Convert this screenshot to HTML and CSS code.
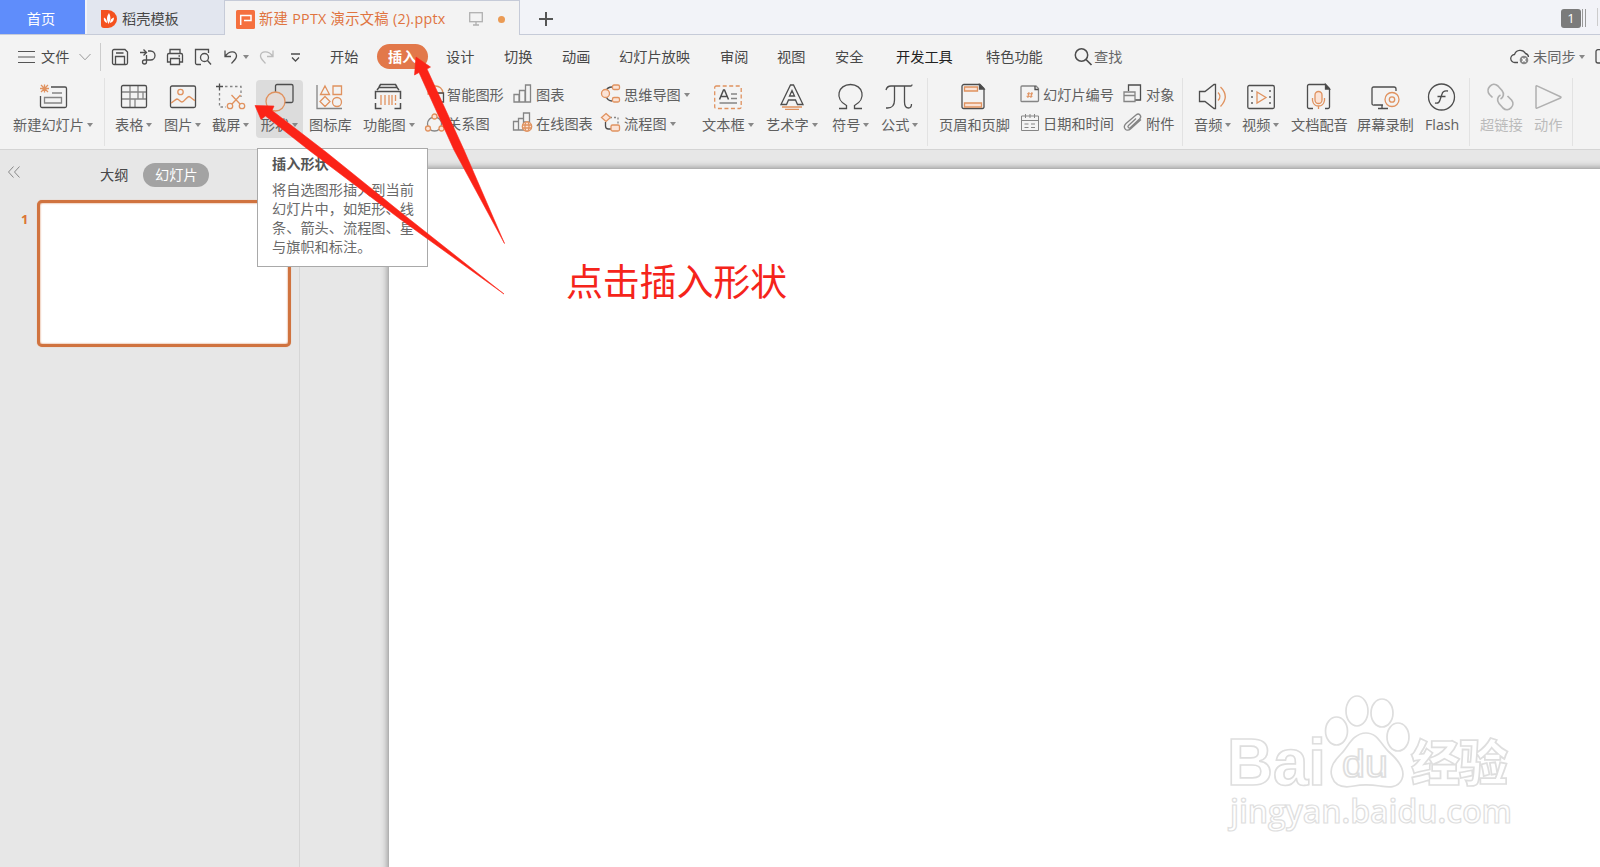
FILE: index.html
```html
<!DOCTYPE html>
<html lang="zh-CN">
<head>
<meta charset="utf-8">
<title>新建 PPTX 演示文稿 (2).pptx</title>
<link rel="stylesheet" href="styles.css">
</head>
<body>
<div class="app">
  <header class="tabs">
    <div class="tab home">首页</div>
    <div class="tab docer">
      <svg width="16" height="18" viewBox="0 0 16 18"><path d="M0 0h7a9 9 0 0 1 0 18H3a3 3 0 0 1-3-3z" fill="#f4511e"/><path d="M7.500 14C5 9 6 6 8 3c2 4 2 7-.5 11zM6 13C3 12 2.500 9 3 7.500 5 8.500 6 10.500 6 13zM9 13c0-3 1.500-5 4-5.500 0 3-1.500 5-4 5.500z" fill="#fff"/></svg>
      <span>稻壳模板</span>
    </div>
    <div class="tab doc">
      <svg width="19" height="19" viewBox="0 0 19 19"><rect width="19" height="19" rx="1.500" fill="#f5703e"/><path d="M4.700 15V5.500H15v5H8" fill="none" stroke="#fff" stroke-width="1.500"/></svg>
      <span class="doc-name">新建 PPTX 演示文稿 (2).pptx</span>
      <svg class="monitor" width="14" height="14" viewBox="0 0 14 14" fill="none" stroke="#b0b0b0" stroke-width="1.300"><rect x=".7" y=".7" width="12.600" height="9"/><path d="M7 10v3M4 13h6"/></svg>
      <i class="dot"></i>
    </div>
    <svg class="plus" width="14" height="14" viewBox="0 0 14 14"><path d="M7 0v14M0 7h14" stroke="#555" stroke-width="2"/></svg>
    <div class="count">1</div><i class="pages"></i><i class="edge"></i>
  </header>

  <nav class="menu">
    <svg width="18" height="14" viewBox="0 0 18 14" stroke="#555" stroke-width="1.200"><path d="M0 1.500h17M0 7h17M0 12.500h17"/></svg>
    <span>文件</span>
    <svg width="12" height="8" viewBox="0 0 12 8" fill="none" stroke="#999"><path d="M.5 1 6 6.800 11.500 1"/></svg>
    <i class="vline"></i>
    <svg class="ic" width="18" height="18" viewBox="0 0 18 18"><path d="M1.500 3a1.500 1.500 0 0 1 1.500-1.500h11L16.500 4v11a1.500 1.500 0 0 1-1.500 1.500H3A1.500 1.500 0 0 1 1.500 15zM4.500 16V8.500h9V16M5 5h7.500"/></svg>
    <svg class="ic" width="18" height="18" viewBox="0 0 18 18"><path d="M1 4.500h6M4.500 1.500 7.500 4.500l-3 3M9 3h2.500a4.500 4.500 0 0 1 0 9H5.500a2 2 0 1 0 2 2V7"/></svg>
    <svg class="ic" width="18" height="18" viewBox="0 0 18 18"><path d="M4 5V1.500h10V5M4 14H1.500V7a1.500 1.500 0 0 1 1.500-1.500h12A1.500 1.500 0 0 1 16.500 7v7H14M4.500 10.500h9v6h-9zM12.500 8h1.500"/></svg>
    <svg class="ic" width="18" height="18" viewBox="0 0 18 18"><path d="M7 16.500H3A1.500 1.500 0 0 1 1.500 15V1.500h13V5"/><circle cx="10.500" cy="9.500" r="4"/><path d="m13.500 12.500 3.500 4"/></svg>
    <svg class="ic" width="18" height="18" viewBox="0 0 18 18"><path d="M3 2.500v6h6M3 8.500C8 1.500 14 3.500 14.500 7.500c.3 3-2.500 5-5 8"/></svg>
    <i class="caret"></i>
    <svg class="ic faint" width="18" height="18" viewBox="0 0 18 18"><path d="M15 2.500v6H9M15 8.500C10 1.500 3 3.500 2.500 7.500c-.3 3 2.500 5 5 8"/></svg>
    <svg class="ic" width="12" height="12" viewBox="0 0 12 12"><path d="M1 3h9M2 6.500l3.500 3.500L9 6.500"/></svg>
    <span>开始</span>
    <b class="pill">插入</b>
    <span>设计</span>
    <span>切换</span>
    <span>动画</span>
    <span>幻灯片放映</span>
    <span>审阅</span>
    <span>视图</span>
    <span>安全</span>
    <span class="strong">开发工具</span>
    <span>特色功能</span>
    <svg class="ic find" width="19" height="19" viewBox="0 0 19 19"><circle cx="7.500" cy="8" r="6.200" stroke-width="1.500"/><path d="m12 12.500 5.500 5.500" stroke-width="1.700"/></svg>
    <span class="dim">查找</span>
    <svg class="ic" width="20" height="18" viewBox="0 0 20 18"><path d="M8 14.500H5A4 4 0 0 1 4.500 6.500 6 6 0 0 1 15.500 5.500 4 4 0 0 1 18.500 9"/><circle cx="14" cy="12" r="4.300" fill="#888" stroke="none"/><path d="m12.300 10.300 3.400 3.400m0-3.400-3.400 3.400" stroke="#fff"/></svg>
    <span class="dim">未同步</span>
    <i class="caret"></i>
    <svg class="ic" width="5" height="15" viewBox="0 0 5 15"><path d="M7 .7H3A2 2 0 0 0 1 3v9a2 2 0 0 0 2 2h4"/></svg>
  </nav>

  <section class="ribbon">
    <div class="btn"><svg width="28" height="28" viewBox="0 0 28 28"><path d="M12 5h14a1.500 1.500 0 0 1 1.500 1.500V24a1.500 1.500 0 0 1-1.500 1.500H3A1.500 1.500 0 0 1 1.500 24V14"/><path class="g" d="M13 11h10M5.500 15.500h17v5.500h-17z"/><path class="o" d="M5.500 2.500v8M1 6.500h9M2 3l7 7M9 3l-7 7"/></svg><span class="drop">新建幻灯片</span></div>
    <i class="sep"></i>
    <div class="btn"><svg width="28" height="28" viewBox="0 0 28 28"><path class="g" d="M1.500 10h25M1.500 17h25M10 4v22M18 4v13M15 17v9M23 10v7"/><rect x="1.500" y="3.500" width="25" height="22" rx="1.500"/></svg><span class="drop">表格</span></div>
    <div class="btn"><svg width="28" height="28" viewBox="0 0 28 28"><rect x="1.500" y="4" width="25" height="21.500" rx="1.500"/><circle class="o" cx="11.500" cy="10" r="2.700"/><path class="o" d="M2 21c2-1 4-3.500 6-4 2 0 3 3 5 3s5-5.500 7-5.500c2 .5 4 3.500 6 4"/></svg><span class="drop">图片</span></div>
    <div class="btn"><svg width="28" height="28" viewBox="0 0 28 28"><path d="M2.500 1.500v7M-1 4.500h7"/><path class="g" stroke-dasharray="2.500 2.500" d="M8 4.500h16V15M2.500 11v14H9"/><g class="o"><circle cx="13" cy="24" r="2.700"/><circle cx="25" cy="24" r="2.700"/><path d="m15 22 8.500-9M23 22l-8.500-9"/></g></svg><span class="drop">截屏</span></div>
    <div class="btn hot"><svg width="28" height="28" viewBox="0 0 28 28"><rect x="9.500" y="2.500" width="17.500" height="18" rx="1.500"/><circle cx="9.500" cy="19.500" r="9.500" fill="#e4dbd7" class="of"/></svg><span class="drop">形状</span></div>
    <div class="btn"><svg width="28" height="28" viewBox="0 0 28 28"><path class="g" d="M1 3v23.500h25"/><g class="o"><path d="m9 4 4.500 8.500h-9zM17 4h8.500v8.500H17zM9 14.500l5 5-5 5-5-5z"/><circle cx="21" cy="20" r="4.500"/></g></svg><span>图标库</span></div>
    <div class="btn"><svg width="28" height="28" viewBox="0 0 28 28"><path d="M4 5 5.500 2.500h15L22 5M2 8l2-2.500h18L24 8M.5 17V9.500h25V17M.5 21v5.500h6M25.500 21v5.500h-6" stroke-width="1.500"/><path class="o" d="M6 13v10M10 13v10M14 13v10M17 13v10M20.500 13v6M20.500 21v2"/></svg><span class="drop">功能图</span></div>
    <div class="stack">
      <div class="row"><svg width="20" height="20" viewBox="0 0 20 20"><path class="o" d="M1 10a7.500 7.500 0 0 1 15-1zM1 10h7"/><path d="M8 9h8.500v9H8z"/></svg><span>智能图形</span></div>
      <div class="row"><svg width="20" height="20" viewBox="0 0 20 20"><circle class="g" cx="7.500" cy="11" r="7"/><g class="of" fill="#fbe3d6"><circle cx="7.500" cy="3.500" r="2.500"/><circle cx="1" cy="15.500" r="2.500"/><circle cx="14.500" cy="15.500" r="2.500"/></g></svg><span>关系图</span></div>
    </div>
    <div class="stack wide">
      <div class="row"><svg width="20" height="20" viewBox="0 0 20 20"><path class="g" d="M1 10.500h5V18H1zM6.500 6.500H12V18H6.500zM12.500 1h5v17h-5z"/></svg><span>图表</span></div>
      <div class="row"><svg width="20" height="20" viewBox="0 0 20 20"><path class="g" d="M.5 8.500h5V17h-5zM5.500 5.500h5V17h-5zM10.500 0h6v9h-6z"/><g class="of" fill="#fbe3d6"><circle cx="14" cy="13.500" r="4.700"/><ellipse cx="14" cy="13.500" rx="2" ry="4.700"/><path d="M9.500 12h9M9.500 15h9"/></g></svg><span>在线图表</span></div>
    </div>
    <div class="stack wide">
      <div class="row"><svg width="20" height="20" viewBox="0 0 20 20"><path d="M5 7C6 4 8 3 11 3M5 12c1 3 3 5 6 5"/><g class="of" fill="#fbe3d6"><circle cx="4.500" cy="9.500" r="4"/><rect x="11.500" y="1" width="7" height="4.500" rx="1.500"/><rect x="11.500" y="13.500" width="7" height="4.500" rx="1.500"/></g></svg><span class="drop">思维导图</span></div>
      <div class="row"><svg width="20" height="20" viewBox="0 0 20 20"><path d="M4.500 9v4q0 3 3 3H10"/><path class="g" stroke-dasharray="2 2" d="M9 4.500h8V12"/><g class="of" fill="#fbe3d6"><path d="m5 .5 4.500 4L5 8.500l-4.500-4z"/><rect x="10" y="12" width="8.500" height="6" rx="1.500"/></g></svg><span class="drop">流程图</span></div>
    </div>
    <div class="btn"><svg width="28" height="28" viewBox="0 0 28 28"><rect class="o" x=".7" y="4" width="26.500" height="22.500" rx="1.500" stroke-dasharray="4 2.500"/><path d="m5.500 17.500 4-9.500h1l4 9.500M7 14.500h6" stroke-width="1.500"/><path class="g" d="M17 12h6M17 16.500h6M5.500 21h17.500"/></svg><span class="drop">文本框</span></div>
    <div class="btn"><svg width="28" height="28" viewBox="0 0 28 28"><path d="M12.500 3h3L25 22.500h-5.500L17.500 18h-7l-2 4.500H3zM14 8.500l2.500 5.500h-5z"/><path class="o" d="M4 25h20M7 27.300h14"/></svg><span class="drop">艺术字</span></div>
    <div class="btn"><svg width="28" height="28" viewBox="0 0 28 28"><path d="M2 26.500h7.500v-3C-3 17 1 2.500 13.500 2.500S30 17 17.500 23.500v3H25"/></svg><span class="drop">符号</span></div>
    <div class="btn"><svg width="28" height="28" viewBox="0 0 28 28"><path d="M0 8q1-4 5-4h20q1 0 1-1.500M8.500 4.500V18q0 8-7 8H0M18.500 4.500V20q0 6 4 6 3 0 3-4"/></svg><span class="drop">公式</span></div>
    <i class="sep"></i>
    <div class="btn"><svg width="28" height="28" viewBox="0 0 28 28"><path d="M2 4.500a2 2 0 0 1 2-2h16l4 4V25a1.500 1.500 0 0 1-1.500 1.500h-19A1.500 1.500 0 0 1 2 25z"/><path d="M19.500 2.500V7H24z" fill="#444"/><g class="of" fill="#fbe3d6"><path d="M4.500 5h13v4h-13zM4.500 21h17v4h-17z"/></g></svg><span>页眉和页脚</span></div>
    <div class="stack fields">
      <div class="row"><svg width="20" height="20" viewBox="0 0 20 20"><path class="g" d="M2 2h14l2.500 2.500v12A1 1 0 0 1 17.500 17.500h-15A1 1 0 0 1 1 16.500V3a1 1 0 0 1 1-1z"/><path d="M15 2v3.500h3.500"/><path class="o thin" d="m9 8-1.200 6M12 8l-1.200 6M7 9.800h6M6.500 12.300h6"/></svg><span>幻灯片编号</span></div>
      <div class="row"><svg width="20" height="20" viewBox="0 0 20 20"><path class="g thin" d="M1.500 3h17v14.500h-17zM1.500 7.500h17M5.500 1v4M10 1v4M14.500 1v4M4.500 11h4M11 11h4M4.500 14.500h4M11 14.500h4"/></svg><span>日期和时间</span></div>
    </div>
    <div class="stack wide">
      <div class="row"><svg width="20" height="20" viewBox="0 0 20 20"><path d="M5.500 7V1H17.500v15H12"/><path class="g" d="M1 8h11v9.500H1zM1 11.500h11"/></svg><span>对象</span></div>
      <div class="row"><svg width="20" height="20" viewBox="0 0 20 20"><path class="g" d="m13 5.500-7.500 7c-1.500 1.500.5 3.500 2 2l9-8.500c3-3-.5-6.500-3.500-4L3 10.500c-4 4 .5 9 4.500 5.500L18 6.500"/></svg><span>附件</span></div>
    </div>
    <i class="sep"></i>
    <div class="btn"><svg width="28" height="28" viewBox="0 0 28 28"><path d="M.5 9.500H6L15 2.500h1.500v24H15L6 19.500H.5z"/><path class="o" d="M19 10.500q4 4 0 8M21.500 5q9.500 9.500 0 19.500"/></svg><span class="drop">音频</span></div>
    <div class="btn"><svg width="28" height="28" viewBox="0 0 28 28"><rect x=".8" y="3.500" width="26.500" height="23" rx="1.500"/><path class="g" stroke-width="2" stroke-dasharray="2 4" d="M5 8v15M23 8v15"/><path class="o" d="m10 10 9 5.500-9 5.500z"/></svg><span class="drop">视频</span></div>
    <div class="btn"><svg width="28" height="28" viewBox="0 0 28 28"><path d="M8 26.500H4A1.500 1.500 0 0 1 2.500 25V4A1.500 1.500 0 0 1 4 2.500h16.500l4 4V25a1.500 1.500 0 0 1-1.500 1.500h-3"/><path d="M20.500 2.500V7h4z" fill="#444"/><rect class="of" x="10" y="9.500" width="7" height="12" rx="3.500" fill="#fbe3d6"/><path class="o" d="M7.500 16v2.500q1 5.500 6 5.500t6-5.500V16M13.500 24v3"/></svg><span>文档配音</span></div>
    <div class="btn"><svg width="28" height="28" viewBox="0 0 28 28"><path d="M12 23H3A1.500 1.500 0 0 1 1 21.500v-15A1.500 1.500 0 0 1 2.500 5H23q2 0 2 2v2M11 23v3.500M7 26.500h10"/><g class="o"><circle cx="21" cy="17.500" r="7"/><circle cx="21" cy="17.500" r="2.700"/></g></svg><span>屏幕录制</span></div>
    <div class="btn"><svg width="28" height="28" viewBox="0 0 28 28"><circle cx="13.500" cy="15" r="13"/><path d="M20 9q-5-1-6 3l-2 6q-1 4-5 3M9.500 14.500h8"/></svg><span>Flash</span></div>
    <i class="sep"></i>
    <div class="btn off"><svg width="28" height="28" viewBox="0 0 28 28"><path d="M5.500 15.500 2.500 12.500C-2 7 5-1 11 4l4 4.500c2.500 3 1.500 7-1.500 8.500M20.500 14l4 4c4.500 5.500-3 13-8.500 8l-4-4.500c-2.500-3-1.500-7 1.500-8.500" stroke-width="1.700"/></svg><span>超链接</span></div>
    <div class="btn off"><svg width="28" height="28" viewBox="0 0 28 28"><path d="M2 4.500v21q0 1 1 .6L26.500 16q1-.8 0-1.300L3 3.900q-1-.4-1 .6z" stroke-linejoin="round" stroke-width="1.500"/></svg><span>动作</span></div>
    <i class="sep"></i>
  </section>

  <main class="work">
    <aside class="side">
      <div class="side-head">
        <svg width="12" height="12" viewBox="0 0 12 12" fill="none" stroke="#888"><path d="M5.500.5.500 6l5 5.500M11.500.5 6.500 6l5 5.500"/></svg>
        <span class="outline">大纲</span><span class="slides">幻灯片</span>
      </div>
      <div class="thumb-row"><b>1</b><div class="thumb"></div></div>
    </aside>
    <div class="stage"><div class="slide"></div></div>
  </main>

  <div class="tip"><b>插入形状</b><p>将自选图形插入到当前<br>幻灯片中，如矩形、线<br>条、箭头、流程图、星<br>与旗帜和标注。</p></div>

  <svg class="marks" width="1600" height="867" viewBox="0 0 1600 867">
    <g fill="#fb2317" stroke="#fb2317" stroke-width=".6">
      <path d="M416 57 430.500 67 427 69 464 150 504.500 243.500 454 150 419 72.500 414.500 75z"/>
      <path d="M255 105.500 274 106 272 110.500 326 152 401 212.500 504 294 400 219 310 151 265.500 116 261 119.500z"/>
    </g>
    <text class="callout" x="566" y="296" textLength="221">点击插入形状</text>
    <g class="mark">
      <text class="bai" x="1227" y="785" textLength="99" lengthAdjust="spacingAndGlyphs">Bai</text>
      <ellipse cx="1336.500" cy="731" rx="11" ry="14"/><ellipse cx="1357" cy="711" rx="11" ry="15"/><ellipse cx="1382" cy="713" rx="11" ry="14"/><ellipse cx="1398" cy="737" rx="11" ry="14"/>
      <path d="M1366 733c12 0 15 12 23 19s17 17 13 27-15 8-22 7-16-2-26 0-19 0-22-9 2-16 9-23 12-21 25-21z"/>
      <text class="du" x="1342" y="777" textLength="46" lengthAdjust="spacingAndGlyphs">du</text>
      <text class="jy" x="1411" y="781" textLength="97">经验</text>
      <text class="url" x="1230" y="823" textLength="282" lengthAdjust="spacingAndGlyphs">jingyan.baidu.com</text>
    </g>
  </svg>
</div>
</body>
</html>
```
FILE: styles.css
```css
* { box-sizing: border-box; }
body { margin: 0; overflow: hidden; font: 14.2px/20px "Open Sans", "Noto Sans CJK SC", sans-serif; color: #484848; }
.app { position: relative; width: 1600px; height: 867px; overflow: hidden; display: flex; flex-direction: column; background: #f3f3f3; }
svg { display: block; flex: none; }
span, b { white-space: nowrap; }

.tabs { display: flex; align-items: center; height: 35px; background: #f2f3f8; border-bottom: 1px solid #c6cbd8; }
.tab { display: flex; align-items: center; height: 34px; padding-top: 3px; }
.home { width: 85px; padding: 3px 3px 0 0; justify-content: center; background: #5f8dfb; color: #fff; }
.docer { width: 137px; margin-left: 2px; padding-left: 14px; gap: 5px; background: #e2e6ef; }
.doc { width: 296px; height: 35px; padding: 2px 0 0 11px; background: #f3f3f3; border: 1px solid #c6cbd8; border-bottom: 0; color: #e0743f; margin-bottom: -1px; }
.doc .doc-name { width: 210px; margin-left: 4px; font-size: 14.3px; letter-spacing: 0.28px; }
.dot { width: 7px; height: 7px; margin-left: 15px; border-radius: 50%; background: #eb9b54; }
.plus { margin: 3px 0 0 19px; }
.count { width: 20px; height: 19px; margin: 2px 0 0 auto; border-radius: 3px; background: #7b7b7b; color: #fff; text-align: center; line-height: 19px; font-size: 13px; }
.pages { width: 4px; height: 18px; margin: 2px 11px 0 1px; border: solid #999; border-width: 0 1px; }
.edge { width: 3px; height: 18px; border-left: 1px solid #ccc; }

.menu { display: grid; align-items: center; height: 43px; padding-left: 18px; grid-template-columns: 23px 38px 21px 11px 28px 27px 28px 28px 21px 15px 32px 40px 47px 69px 58px 58px 57px 101px 57px 58px 61px 90px 88px 20px 416px 23px 46px 16px 5px; }
.menu span { margin-top: 1px; }
.vline { width: 1px; height: 28px; background: #ccc; }
.ic, .ribbon svg { fill: none; stroke: #4d4d4d; stroke-width: 1.3; overflow: visible; }
.ic.faint { stroke: #bbb; }
.pill { width: 51px; height: 25px; padding-left: 11px; border-radius: 13px; background: #e2784a; color: #fff; line-height: 26px; }
.menu .strong { color: #222; }
.dim { color: #666; }
.caret { width: 0; height: 0; border: 3.5px solid transparent; border-top: 4px solid #888; border-bottom: 0; }

.ribbon { display: grid; height: 72px; padding-left: 13px; border-bottom: 1px solid #d4d4d4; color: #606060; justify-items: start; align-items: start; grid-template-columns: 91px 11px 49px 48px 48px 49px 54px 64px 86px 88px 101px 64px 66px 49px 46px 12px 81px 103px 59px 12px 48px 49px 66px 68px 44px 11px 54px 38px 1px; }
.btn { display: flex; flex-direction: column; align-items: center; padding-top: 4px; height: 60px; }
.btn span { margin-top: 5px; }
.drop { display: flex; align-items: center; gap: 3px; }
.drop::after { content: ""; margin-top: -1px; border: 3px solid transparent; border-top: 4px solid #888; border-bottom: 0; }
.hot { width: 47px; height: 58px; margin: 2px 0 0 -4px; padding-top: 2px; border-radius: 4px; background: #dcdcdc; }
.sep { width: 1px; height: 68px; background: #e2e2e2; }
.ribbon .g { stroke: #858585; }
.ribbon .o, .ribbon .of { stroke: #e0925f; }
.ribbon .thin { stroke-width: 1; }
.stack { display: flex; flex-direction: column; gap: 9px; padding-top: 6px; }
.row { display: flex; align-items: center; height: 20px; }
.row span { margin: 2px 0 0; }
.wide .row span, .fields .row span { margin-left: 3px; }
.ribbon .off { color: #bbb; }
.ribbon .off svg { stroke: #b0b0b0; }

.work { display: flex; flex: 1; background: #e7e7e7; }
.side { width: 300px; border-right: 1px solid #d6d6d6; }
.side-head { display: flex; align-items: center; height: 50px; padding-left: 8px; }
.side-head svg { margin-top: -6px; }
.outline { margin: 0 0 0 80px; }
.slides { width: 66px; height: 24px; margin-left: 15px; border-radius: 12px; margin-top: -1px; background: #a3a3a3; color: #fff; text-align: center; line-height: 23px; }
.thumb-row { display: flex; padding-left: 21px; color: #dc7535; }
.thumb-row b { width: 16px; margin-top: 9px; font-size: 13px; }
.thumb { width: 254px; height: 147px; background: #fff; border: 3px solid #d0733f; border-radius: 5px; box-shadow: 0 0 1px #e5a27c, inset 0 0 2px #d0733f; }
.stage { display: flex; flex: 1; padding: 19px 0 0 89px; overflow: hidden; }
.slide { flex: 1; background: #fff; box-shadow: 0 0 7px 1px #888; margin-right: -10px; margin-bottom: -10px; }

.tip { position: absolute; left: 257px; top: 148px; width: 171px; height: 119px; padding: 5px 0 0 14px; background: #fff; border: 1px solid #a9a9a9; color: #6a6a6a; line-height: 19px; }
.tip b { color: #555; }
.tip p { margin: 7px 0 0; white-space: nowrap; }
.marks { position: absolute; left: 0; top: 0; pointer-events: none; }
.callout { font-size: 37px; fill: #f5241b; }
.mark { fill: #fff; stroke: #dedede; stroke-width: 1.7; }
.bai { font: bold 66px "Liberation Sans", sans-serif; }
.du { font: 38px "Liberation Sans", sans-serif; }
.jy { font: 900 49px "Noto Sans CJK SC", sans-serif; }
.url { font: 600 32px "Open Sans", sans-serif; stroke-width: 1.2; }
```
